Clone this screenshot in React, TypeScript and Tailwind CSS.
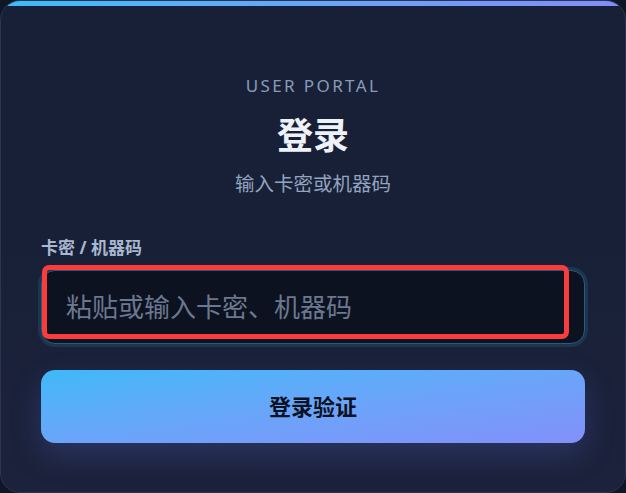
const App = () => {
  return (
    <div
      className="w-[626px] h-[493px] bg-[#0f1626]"
      style={{ fontFamily: '"Noto Sans", "Noto Sans CJK SC", sans-serif' }}
    >
      <div className="relative w-full h-full rounded-[20px] overflow-hidden border border-[#2a3550] bg-gradient-to-b from-[#172036] via-[#182038] to-[#1c223b]">
        <div className="h-[5px] bg-gradient-to-r from-[#38bdf8] to-[#818cf8]" />
        <div className="px-10 pt-[69px] flex flex-col">
          <p className="text-center text-[17px] leading-[22px] tracking-[0.14em] text-[#8a9bb8]">
            USER PORTAL
          </p>
          <h1 className="mt-[17px] text-center text-[36px] leading-[44px] font-bold text-[#eef2f8]">
            登录
          </h1>
          <p className="mt-[13px] text-center text-[19.5px] leading-[26px] text-[#93a4bf]">
            输入卡密或机器码
          </p>
          <label className="mt-[41px] text-[17px] leading-5 font-bold text-[#a9b8d0]">
            卡密 / 机器码
          </label>
          <div className="relative mt-[12px]">
            <input
              className="w-full h-[74px] rounded-[14px] bg-[#0d1220] border border-[#2f5a7a] ring-[3px] ring-[#1c3550] px-6 text-[26px] text-[#cbd5e1] placeholder:text-[#6b7890] outline-none"
              placeholder="粘贴或输入卡密、机器码"
            />
            <div className="absolute left-[1px] top-[-5px] w-[527px] h-[74px] rounded-[7px] border-[5px] border-[#fa3c3c] pointer-events-none" />
          </div>
          <button className="mt-[26px] h-[73px] rounded-[14px] bg-gradient-to-br from-[#3db9f8] to-[#8290fa] text-[22px] font-bold text-[#0b1224] shadow-[0_12px_30px_rgba(90,110,220,0.25)]">
            登录验证
          </button>
        </div>
      </div>
    </div>
  );
};

export default App;
